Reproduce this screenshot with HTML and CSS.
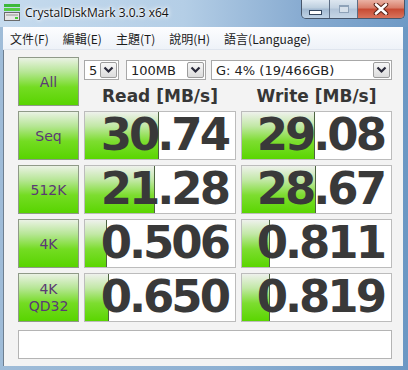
FILE: index.html
```html
<!DOCTYPE html>
<html lang="zh-Hant">
<head>
  <meta charset="UTF-8" />
  <title>CrystalDiskMark 3.0.3 x64</title>
  <link rel="stylesheet" href="styles.css">
</head>
<body>
<div class="window">
  <div class="titlebar">
    <svg class="app-icon" width="16" height="17" viewBox="0 0 16 17">
      <rect x="0" y="0" width="16" height="3" fill="#3cb83c"/>
      <rect x="0" y="4" width="16" height="3" fill="#55cc44"/>
      <rect x="0.5" y="8.5" width="15" height="8" fill="#e6e6e6" stroke="#6a6a6a"/>
      <rect x="2" y="10" width="12" height="2" fill="#bdbdbd"/>
      <rect x="11" y="13" width="3" height="2" fill="#44cc33"/>
    </svg>
    <span class="title">CrystalDiskMark 3.0.3 x64</span>
    <div class="caption">
      <div class="cap min"><span class="min-glyph"></span></div>
      <div class="cap max"><span class="max-glyph"></span></div>
      <div class="cap close">
        <svg width="16" height="12" viewBox="0 0 16 12">
          <path d="M3 1.5 L13 10.5 M13 1.5 L3 10.5" stroke="#5a2418" stroke-width="4.6" stroke-linecap="round"/>
          <path d="M3 1.5 L13 10.5 M13 1.5 L3 10.5" stroke="#ffffff" stroke-width="2.6" stroke-linecap="round"/>
        </svg>
      </div>
    </div>
  </div>

  <div class="frame">
    <div class="menubar">
      <span>文件(F)</span>
      <span>編輯(E)</span>
      <span>主題(T)</span>
      <span>說明(H)</span>
      <span>語言(Language)</span>
    </div>

    <div class="client">
      <div class="bench">
        <div class="label-btn">All</div>
        <div class="controls">
          <div class="selects">
            <div class="select count"><span>5</span><span class="drop"><svg width="11" height="8" viewBox="0 0 11 8"><path d="M1.5 1.5 L5.5 5.5 L9.5 1.5" fill="none" stroke="#2a2a3a" stroke-width="2.2"/></svg></span></div>
            <div class="select size"><span>100MB</span><span class="drop"><svg width="11" height="8" viewBox="0 0 11 8"><path d="M1.5 1.5 L5.5 5.5 L9.5 1.5" fill="none" stroke="#2a2a3a" stroke-width="2.2"/></svg></span></div>
            <div class="select drive"><span>G: 4% (19/466GB)</span><span class="drop"><svg width="11" height="8" viewBox="0 0 11 8"><path d="M1.5 1.5 L5.5 5.5 L9.5 1.5" fill="none" stroke="#2a2a3a" stroke-width="2.2"/></svg></span></div>
          </div>
          <div class="headers">
            <div>Read [MB/s]</div>
            <div>Write [MB/s]</div>
          </div>
        </div>

        <div class="label-btn">Seq</div>
        <div class="result"><div class="bar" style="width: 74px"></div><span class="value">30.74</span></div>
        <div class="result"><div class="bar" style="width: 73px"></div><span class="value">29.08</span></div>

        <div class="label-btn">512K</div>
        <div class="result"><div class="bar" style="width: 70px"></div><span class="value">21.28</span></div>
        <div class="result"><div class="bar" style="width: 74px"></div><span class="value">28.67</span></div>

        <div class="label-btn">4K</div>
        <div class="result"><div class="bar" style="width: 22px"></div><span class="value">0.506</span></div>
        <div class="result"><div class="bar" style="width: 28px"></div><span class="value">0.811</span></div>

        <div class="label-btn two-line">4K<br>QD32</div>
        <div class="result"><div class="bar" style="width: 24px"></div><span class="value">0.650</span></div>
        <div class="result"><div class="bar" style="width: 28px"></div><span class="value">0.819</span></div>
      </div>

      <div class="status"></div>
    </div>
  </div>
</div>
</body>
</html>
```

FILE: styles.css
```css
body {
  margin: 0;
  background: #7fa4c8;
  font-family: "DejaVu Sans", sans-serif;
}

.window {
  width: 408px;
  height: 370px;
  display: flex;
  flex-direction: column;
  background: linear-gradient(to right, #9fbcd8, #8db0d2 55%, #6c98c4);
}

/* title bar */
.titlebar {
  height: 27px;
  display: flex;
  align-items: center;
  padding-left: 4px;
  background: linear-gradient(to right, #c6dbee, #b4cee6 45%, #86aad0 75%, #6f9ac6);
}

.app-icon {
  margin-top: -2px;
}

.title {
  margin-left: 5px;
  margin-top: -2px;
  font-family: "Open Sans", "Liberation Sans", sans-serif;
  font-size: 12px;
  color: #111;
  text-shadow: 0 0 6px #fff, 0 0 4px #fff, 0 0 2px #fff;
}

.caption {
  display: flex;
  align-self: flex-start;
  margin-left: auto;
  margin-right: 3px;
  height: 18px;
  border: 1px solid #47566b;
  border-top: none;
  border-radius: 0 0 5px 5px;
  overflow: hidden;
}

.cap {
  height: 100%;
  display: flex;
  align-items: center;
  justify-content: center;
}

.min {
  width: 27px;
  border-right: 1px solid #5c6d84;
  background: linear-gradient(#dfe9f3, #bccede 45%, #a2b9d1 50%, #bfd2e5);
}

.min-glyph {
  width: 11px;
  height: 3px;
  margin-top: 6px;
  background: #fff;
  border: 1px solid #34465e;
}

.max {
  width: 27px;
  border-right: 1px solid #5c6d84;
  background: linear-gradient(#dde6ef, #c4d3e2 45%, #b2c4d8 50%, #c6d6e6);
}

.max-glyph {
  width: 8px;
  height: 5px;
  border: 1px solid #8ea2b8;
  border-top-width: 2px;
  background: #d6e0ea;
}

.close {
  width: 46px;
  background: linear-gradient(#eab2a4, #d87c68 45%, #c74a33 50%, #d9745c);
}

/* frame body */
.frame {
  flex: 1;
  display: flex;
  flex-direction: column;
  padding: 0 5px 4px 3px;
}

.menubar {
  height: 22px;
  display: flex;
  align-items: center;
  gap: 14px;
  padding-left: 7px;
  font-family: "Noto Sans CJK TC", sans-serif;
  font-size: 12px;
  color: #1a1a1a;
  background: linear-gradient(#fdfdff, #eef2f8);
  border-bottom: 1px solid #dfe5ee;
}

.client {
  flex: 1;
  background: #f3f3f3;
  padding: 7px 0 0 14px;
  border-left: 1px solid #6e7f90;
}

.bench {
  display: grid;
  grid-template-columns: 61px 152px 151px;
  grid-template-rows: repeat(5, 49px);
  column-gap: 5px;
  row-gap: 5px;
}

.label-btn {
  display: flex;
  align-items: center;
  justify-content: center;
  text-align: center;
  font-size: 14px;
  color: #5a3a74;
  border: 1px solid #8f9a88;
  box-sizing: border-box;
  background: linear-gradient(#eaf2e4, #b6e695 30%, #74dc22 62%, #58d400);
}

.two-line {
  line-height: 17px;
}

/* selects + headers */
.controls {
  grid-column: 2 / 4;
  display: flex;
  flex-direction: column;
}

.selects {
  display: flex;
  margin-top: 3px;
}

.select {
  height: 20px;
  display: flex;
  align-items: center;
  padding-left: 4px;
  box-sizing: border-box;
  background: #fff;
  border: 1px solid #a8a8a8;
  font-size: 13px;
  color: #222;
}

.count {
  width: 35px;
}

.size {
  width: 80px;
  margin-left: 7px;
}

.drive {
  width: 181px;
  margin-left: 5px;
}

.drop {
  margin-left: auto;
  margin-right: 1px;
  width: 17px;
  height: 16px;
  display: flex;
  align-items: center;
  justify-content: center;
  box-sizing: border-box;
  border: 1px solid #9c9c9c;
  border-radius: 2px;
  background: linear-gradient(#f7f7f7, #dcdcdc);
}

.headers {
  display: grid;
  grid-template-columns: 152px 151px;
  column-gap: 5px;
  margin-top: 6px;
  font-size: 17px;
  font-weight: bold;
  color: #363636;
  text-align: center;
}

/* result cells */
.result {
  position: relative;
  display: flex;
  align-items: center;
  justify-content: flex-end;
  padding-right: 7px;
  box-sizing: border-box;
  background: #fff;
  border: 1px solid #bcbcbc;
}

.bar {
  position: absolute;
  left: 0;
  top: 0;
  bottom: 0;
  box-sizing: border-box;
  border-right: 1px solid #4d6440;
  background: linear-gradient(#eef1ec, #c2e8a6 30%, #7ddd30 62%, #5ad600);
}

.value {
  position: relative;
  font-size: 45px;
  font-weight: bold;
  letter-spacing: -3px;
  line-height: 47px;
  margin-top: -3px;
  color: #393939;
}

.status {
  width: 374px;
  height: 29px;
  margin-top: 8px;
  box-sizing: border-box;
  background: #fff;
  border: 1px solid #b4b4b4;
}
```
